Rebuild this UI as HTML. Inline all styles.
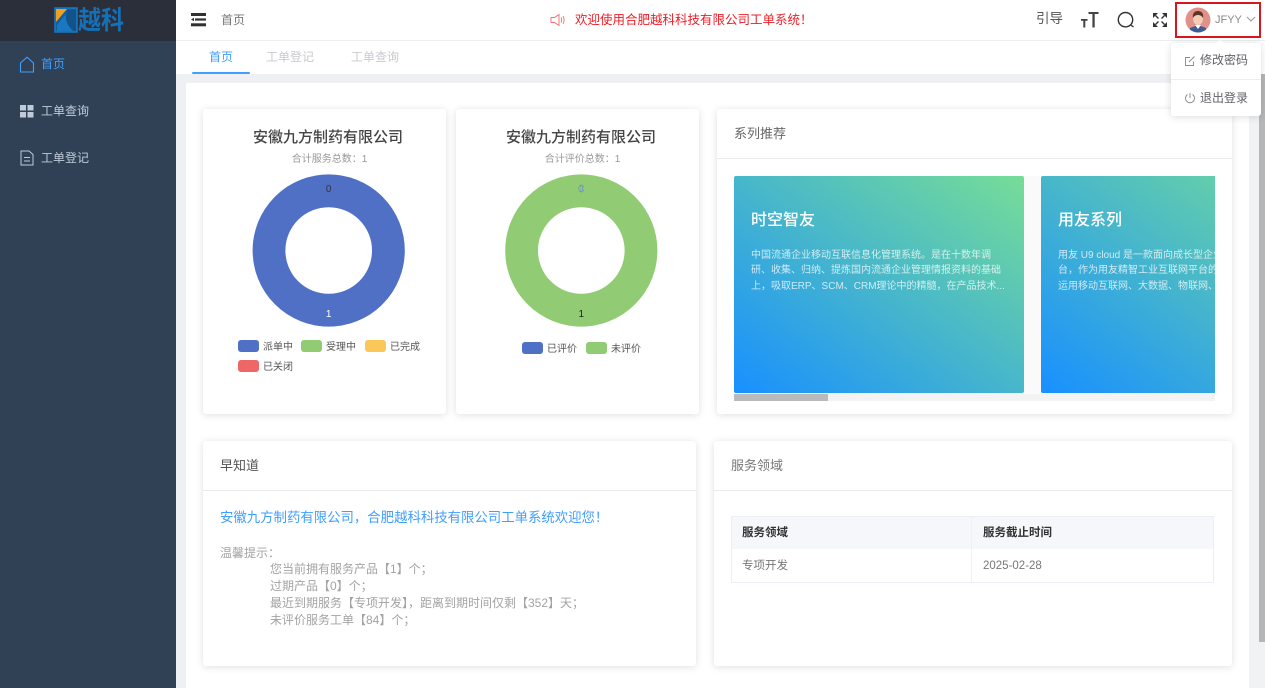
<!DOCTYPE html>
<html lang="zh-CN">
<head>
<meta charset="utf-8">
<title>工单系统</title>
<style>
*{box-sizing:border-box;margin:0;padding:0}
html,body{width:1265px;height:688px;overflow:hidden;background:#fff}
body{position:relative;font-family:"Liberation Sans","Noto Sans CJK SC",sans-serif;color:#606266;font-size:12px}
.a{position:absolute;white-space:nowrap}
.card{position:absolute;background:#fff;border-radius:3px;box-shadow:0 1px 8px rgba(0,0,0,.13);overflow:hidden}
.ch{position:absolute;left:0;right:0;top:0;height:50px;border-bottom:1px solid #e9ebef;font-size:13px;line-height:49px;color:#666}
.tt{position:absolute;left:7px;right:0;text-align:center;font-size:15px;font-weight:500;color:#444;top:19px;line-height:20px}
.st{position:absolute;left:10px;right:0;text-align:center;font-size:10px;color:#999;top:44px;line-height:14px}
.lg{position:absolute;width:21px;height:12px;border-radius:3px}
.lt{position:absolute;font-size:10px;line-height:14px;color:#555;white-space:nowrap}
.sl{position:absolute;top:0;height:217px;background:linear-gradient(to top right,#1890ff,#76dd97);border-radius:2px;color:#fff;overflow:hidden}
.sl b{position:absolute;left:17px;top:35px;font-size:16px;font-weight:500;line-height:20px;white-space:nowrap}
.sl p{position:absolute;left:17px;top:72px;width:256px;font-size:10px;line-height:15.4px;color:rgba(255,255,255,.75);white-space:nowrap}
.tl{position:absolute;white-space:nowrap;font-size:12px;line-height:17px;color:#a3a3a3}
</style>
</head>
<body>
<!-- sidebar -->
<div class="a" style="left:0;top:0;width:176px;height:688px;background:#304156"></div>
<div class="a" style="left:0;top:0;width:176px;height:41px;background:#2b2f3a"></div>
<svg class="a" style="left:54px;top:7px" width="24" height="26" viewBox="0 0 24 26">
<rect x="1" y="1" width="22" height="24" fill="#0f5f9e" stroke="#1a78c2" stroke-width="1.5"/>
<path d="M2 2h11L2 15z" fill="#f0a020"/>
<path d="M14 3h8v21h-3C14 20 11 16 10 12z" fill="#11548c"/>
<path d="M3 24V18L12 7c-1 7 2 12 7 17z" fill="#1a78c2"/>
</svg>
<div class="a" style="left:78px;top:5px;font-size:23px;line-height:31px;font-weight:700;color:#1670b8;transform:scaleY(1.1);transform-origin:center">越科</div>

<svg class="a" style="left:19px;top:56px" width="16" height="17" viewBox="0 0 16 17" fill="none" stroke="#409eff" stroke-width="1.1"><path d="M1.500 7L8 1.200 14.500 7v9h-13z"/></svg>
<div class="a" style="left:41px;top:55px;font-size:12px;line-height:18px;color:#409eff">首页</div>
<svg class="a" style="left:20px;top:105px" width="14" height="13" viewBox="0 0 14 13" fill="#bfcbd9"><rect width="6" height="5.500"/><rect x="7.500" width="6" height="5.500"/><rect y="7" width="6" height="5.500"/><rect x="7.500" y="7" width="6" height="5.500"/></svg>
<div class="a" style="left:41px;top:102px;font-size:12px;line-height:18px;color:#bfcbd9">工单查询</div>
<svg class="a" style="left:20px;top:150px" width="14" height="16" viewBox="0 0 14 16" fill="none" stroke="#bfcbd9" stroke-width="1"><path d="M1 1h8l4 3.500V15H1zM4 7.500h6M4 11h6"/></svg>
<div class="a" style="left:41px;top:149px;font-size:12px;line-height:18px;color:#bfcbd9">工单登记</div>

<!-- top bar -->
<div class="a" style="left:176px;top:40px;width:1089px;height:1px;background:#eceef1"></div>
<svg class="a" style="left:191px;top:13px" width="15" height="14" viewBox="0 0 15 14" fill="#303133"><rect width="15" height="3"/><rect x="4" y="5.400" width="11" height="2.200"/><rect y="10.300" width="15" height="3"/><path d="M0 6.500L3 4.700v3.600z"/></svg>
<div class="a" style="left:221px;top:11px;font-size:12px;line-height:19px;color:#777">首页</div>

<svg class="a" style="left:550px;top:13px" width="16" height="14" viewBox="0 0 16 14" fill="none" stroke="#f56c6c" stroke-width=".9"><path d="M1 4.500h3.500L9 1.500v11l-4.500-3H1zM11 4.500c.8 1.500.8 3.500 0 5M13 3c1.400 2.500 1.400 5.500 0 8"/></svg>
<div class="a" style="left:575px;top:10px;font-size:12.500px;line-height:20px;color:#ee1c25">欢迎使用合肥越科科技有限公司工单系统！</div>

<div class="a" style="left:1036px;top:9px;font-size:13.500px;line-height:20px;color:#555">引导</div>
<svg class="a" style="left:1080px;top:11px" width="20" height="18" viewBox="0 0 20 18" fill="#444"><rect x="8.500" y="1" width="10" height="2"/><rect x="12.400" y="1" width="2.300" height="15.500"/><rect x="1" y="8" width="6.500" height="1.800"/><rect x="3.300" y="8" width="2" height="8.500"/></svg>
<svg class="a" style="left:1117px;top:11px" width="18" height="18" viewBox="0 0 18 18" fill="none" stroke="#333" stroke-width="1.400"><circle cx="8.500" cy="8.700" r="7.200"/><path d="M13.800 14l2.700 2"/></svg>
<svg class="a" style="left:1153px;top:13px" width="14" height="14" viewBox="0 0 14 14" fill="#333" stroke="none"><path d="M0 0h5L0 5zM14 0v5L9 0zM0 14V9l5 5zM14 14H9l5-5z"/><path d="M2.500 2.500l3 3M11.500 2.500l-3 3M2.500 11.500l3-3M11.500 11.500l-3-3" stroke="#333" stroke-width="1.400" fill="none"/></svg>

<div class="a" style="left:1175px;top:2px;width:86px;height:36px;border:2px solid #d9161c"></div>
<svg class="a" style="left:1185px;top:7px" width="26" height="26" viewBox="0 0 26 26">
<defs><clipPath id="c"><circle cx="13" cy="13" r="12.500"/></clipPath></defs>
<g clip-path="url(#c)"><rect width="26" height="26" fill="#e2908a"/><path d="M5 26v-5l8-3 8 3v5z" fill="#3f5d94"/><path d="M10 18l3 4 3-4z" fill="#fff"/><ellipse cx="13" cy="12" rx="5" ry="6" fill="#f3cdb5"/><path d="M8 11c-1-5 2-7 5-7s6 2 5 7c-1-2-3-3-5-3s-4 1-5 3z" fill="#5b3626"/></g></svg>
<div class="a" style="left:1215px;top:10px;font-size:11px;line-height:20px;color:#888">JFYY</div>
<svg class="a" style="left:1246px;top:16px" width="10" height="7" viewBox="0 0 10 7" fill="none" stroke="#999" stroke-width="1"><path d="M1 1l4 4 4-4"/></svg>

<!-- tabs -->
<div class="a" style="left:209px;top:48px;font-size:12px;line-height:18px;color:#409eff">首页</div>
<div class="a" style="left:192px;top:72px;width:58px;height:2px;background:#409eff;border-radius:1px"></div>
<div class="a" style="left:266px;top:48px;font-size:12px;line-height:18px;color:#c8cacf">工单登记</div>
<div class="a" style="left:351px;top:48px;font-size:12px;line-height:18px;color:#c8cacf">工单查询</div>

<!-- main background -->
<div class="a" style="left:176px;top:74px;width:1073px;height:614px;background:#eef0f3"></div>
<div class="a" style="left:186px;top:83px;width:1063px;height:605px;background:#fff"></div>
<div class="a" style="left:1249px;top:74px;width:16px;height:614px;background:#f1f2f4"></div>
<div class="a" style="left:1259px;top:74px;width:6px;height:568px;background:#b5b6b8"></div>

<!-- card 1 -->
<div class="card" style="left:203px;top:109px;width:243px;height:305px">
<div class="tt">安徽九方制药有限公司</div>
<div class="st">合计服务总数：1</div>
<svg style="position:absolute;left:0;top:0" width="243" height="305"><circle cx="125.700" cy="141.500" r="59.700" fill="none" stroke="#5070c6" stroke-width="32.800"/><text x="125.700" y="83" font-size="10" text-anchor="middle" fill="#333" font-family="Liberation Sans">0</text><text x="125.700" y="208" font-size="10" text-anchor="middle" fill="#fff" font-family="Liberation Sans">1</text></svg>
<div class="lg" style="left:34.500px;top:231px;background:#5070c6"></div><div class="lt" style="left:60px;top:232px">派单中</div>
<div class="lg" style="left:98px;top:231px;background:#91cc75"></div><div class="lt" style="left:123px;top:232px">受理中</div>
<div class="lg" style="left:162px;top:231px;background:#fac858"></div><div class="lt" style="left:187px;top:232px">已完成</div>
<div class="lg" style="left:34.500px;top:251px;background:#ee6666"></div><div class="lt" style="left:60px;top:252px">已关闭</div>
</div>

<!-- card 2 -->
<div class="card" style="left:456px;top:109px;width:243px;height:305px">
<div class="tt">安徽九方制药有限公司</div>
<div class="st">合计评价总数：1</div>
<svg style="position:absolute;left:0;top:0" width="243" height="305"><circle cx="125.300" cy="141.500" r="59.700" fill="none" stroke="#91cc75" stroke-width="32.800"/><text x="125.300" y="83" font-size="10" text-anchor="middle" fill="#fff" stroke="#5070c6" stroke-width=".5" font-family="Liberation Sans">0</text><text x="125.300" y="208" font-size="10" text-anchor="middle" fill="#222" font-family="Liberation Sans">1</text></svg>
<div class="lg" style="left:66px;top:233px;background:#5070c6"></div><div class="lt" style="left:91px;top:234px">已评价</div>
<div class="lg" style="left:130px;top:233px;background:#91cc75"></div><div class="lt" style="left:155px;top:234px">未评价</div>
</div>

<!-- card 3 -->
<div class="card" style="left:717px;top:109px;width:515px;height:305px">
<div class="ch" style="padding-left:17px">系列推荐</div>
<div style="position:absolute;left:17px;top:67px;width:481px;height:225px;overflow:hidden;background:#fafafa">
<div class="sl" style="left:0;width:290px"><b>时空智友</b><p>中国流通企业移动互联信息化管理系统。是在十数年调<br>研、收集、归纳、提炼国内流通企业管理情报资料的基础<br>上，吸取ERP、SCM、CRM理论中的精髓，在产品技术...</p></div>
<div class="sl" style="left:307px;width:290px"><b>用友系列</b><p>用友 U9 cloud 是一款面向成长型企业的云<br>台，作为用友精智工业互联网平台的核心<br>运用移动互联网、大数据、物联网、云计算</p></div>
<div style="position:absolute;left:0;top:218px;width:94px;height:7px;background:#b9babc"></div>
<div style="position:absolute;left:94px;top:218px;width:387px;height:7px;background:#f3f3f4"></div>
</div>
</div>

<!-- dropdown -->
<div class="a" style="left:1171px;top:43px;width:90px;height:73px;background:#fff;border-radius:3px;box-shadow:0 1px 8px rgba(0,0,0,.14)"></div>
<div class="a" style="left:1215px;top:40px;width:0;height:0;border-left:5px solid transparent;border-right:5px solid transparent;border-bottom:4px solid #fff"></div>
<div class="a" style="left:1171px;top:79px;width:90px;height:1px;background:#ebeef5"></div>
<svg class="a" style="left:1184px;top:55px" width="12" height="12" viewBox="0 0 12 12" fill="none" stroke="#8a8a8a" stroke-width=".9"><path d="M9.500 6.500v4h-8v-8h4.500M5 7l5.500-5.500"/></svg>
<div class="a" style="left:1200px;top:51px;font-size:12px;line-height:18px;color:#606266">修改密码</div>
<svg class="a" style="left:1184px;top:92px" width="12" height="12" viewBox="0 0 12 12" fill="none" stroke="#8a8a8a" stroke-width=".9"><path d="M3.500 2.500a4.500 4.500 0 1 0 5 0M6 1v5"/></svg>
<div class="a" style="left:1200px;top:89px;font-size:12px;line-height:18px;color:#606266">退出登录</div>

<!-- card 4 -->
<div class="card" style="left:203px;top:441px;width:493px;height:225px">
<div class="ch" style="padding-left:17px;color:#555">早知道</div>
<div class="tl" style="left:17px;top:67px;font-size:13.400px;line-height:20px;color:#409eff">安徽九方制药有限公司，合肥越科科技有限公司工单系统欢迎您！</div>
<div class="tl" style="left:17px;top:104px">温馨提示：</div>
<div class="tl" style="left:67px;top:120px">您当前拥有服务产品【1】个；</div>
<div class="tl" style="left:67px;top:137px">过期产品【0】个；</div>
<div class="tl" style="left:67px;top:154px">最近到期服务【专项开发】，距离到期时间仅剩【352】天；</div>
<div class="tl" style="left:67px;top:171px">未评价服务工单【84】个；</div>
</div>

<!-- card 5 -->
<div class="card" style="left:714px;top:441px;width:518px;height:225px">
<div class="ch" style="padding-left:17px;color:#777">服务领域</div>
<div style="position:absolute;left:17px;top:75px;width:483px;height:67px;border:1px solid #ebeef5">
<div style="position:absolute;left:0;top:0;right:0;height:32px;background:#f5f7fa"></div>
<div style="position:absolute;left:239px;top:0;bottom:0;width:1px;background:#eff1f5"></div>
<div class="a" style="left:10px;top:8px;font-size:11.500px;line-height:17px;font-weight:700;color:#333">服务领域</div>
<div class="a" style="left:251px;top:8px;font-size:11.500px;line-height:17px;font-weight:700;color:#333">服务截止时间</div>
<div class="a" style="left:10px;top:41px;font-size:11.500px;line-height:17px;color:#777">专项开发</div>
<div class="a" style="left:251px;top:41px;font-size:11.500px;line-height:17px;color:#777">2025-02-28</div>
</div>
</div>
</body>
</html>
